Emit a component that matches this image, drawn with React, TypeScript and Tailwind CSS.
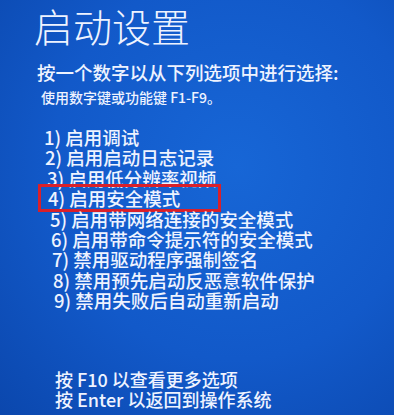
import React from "react";

const items = [
  { t: "1) 启用调试", ml: "ml-[44px]" },
  { t: "2) 启用启动日志记录", ml: "ml-[45px]" },
  { t: "3) 启用低分辨率视频", ml: "ml-[47px]" },
  { t: "4) 启用安全模式", ml: "ml-[48px]", box: true },
  { t: "5) 启用带网络连接的安全模式", ml: "ml-[50px]" },
  { t: "6) 启用带命令提示符的安全模式", ml: "ml-[51px]" },
  { t: "7) 禁用驱动程序强制签名", ml: "ml-[52px]" },
  { t: "8) 禁用预先启动反恶意软件保护", ml: "ml-[53px]" },
  { t: "9) 禁用失败后自动重新启动", ml: "ml-[54px]" },
];

export default function App() {
  return (
    <div
      className="w-[394px] h-[415px] overflow-hidden text-[#eef3ff] bg-[radial-gradient(ellipse_at_60%_40%,#1766d6_0%,#1259c9_55%,#0b47ad_100%)]"
      style={{ fontFamily: '"Noto Sans CJK SC", "Noto Sans", sans-serif' }}
    >
      <div className="flex flex-col">
        <div className="ml-[34px] mt-[2px] text-[39px] leading-[46px] font-light">启动设置</div>
        <div className="ml-[37px] mt-[12px] text-[18.5px] leading-[24px] font-medium">
          按一个数字以从下列选项中进行选择:
        </div>
        <div className="ml-[41px] mt-[4px] text-[14px] leading-[18px] font-medium">使用数字键或功能键 F1-F9。</div>
        <div className="mt-[21px] flex flex-col">
          {items.map((it) => (
            <div key={it.t} className={`relative ${it.ml} text-[18.5px] leading-[20.4px] font-medium whitespace-nowrap`}>
              {it.t}
              {it.box && (
                <div className="absolute left-[-10px] top-[-4px] w-[183px] h-[28px] border-[3px] border-[#d9202a]" />
              )}
            </div>
          ))}
        </div>
        <div className="mt-[58px] flex flex-col">
          <div className="ml-[55px] text-[18px] leading-[20px] font-medium">按 F10 以查看更多选项</div>
          <div className="ml-[55px] text-[18px] leading-[20px] font-medium">按 Enter 以返回到操作系统</div>
        </div>
      </div>
    </div>
  );
}
